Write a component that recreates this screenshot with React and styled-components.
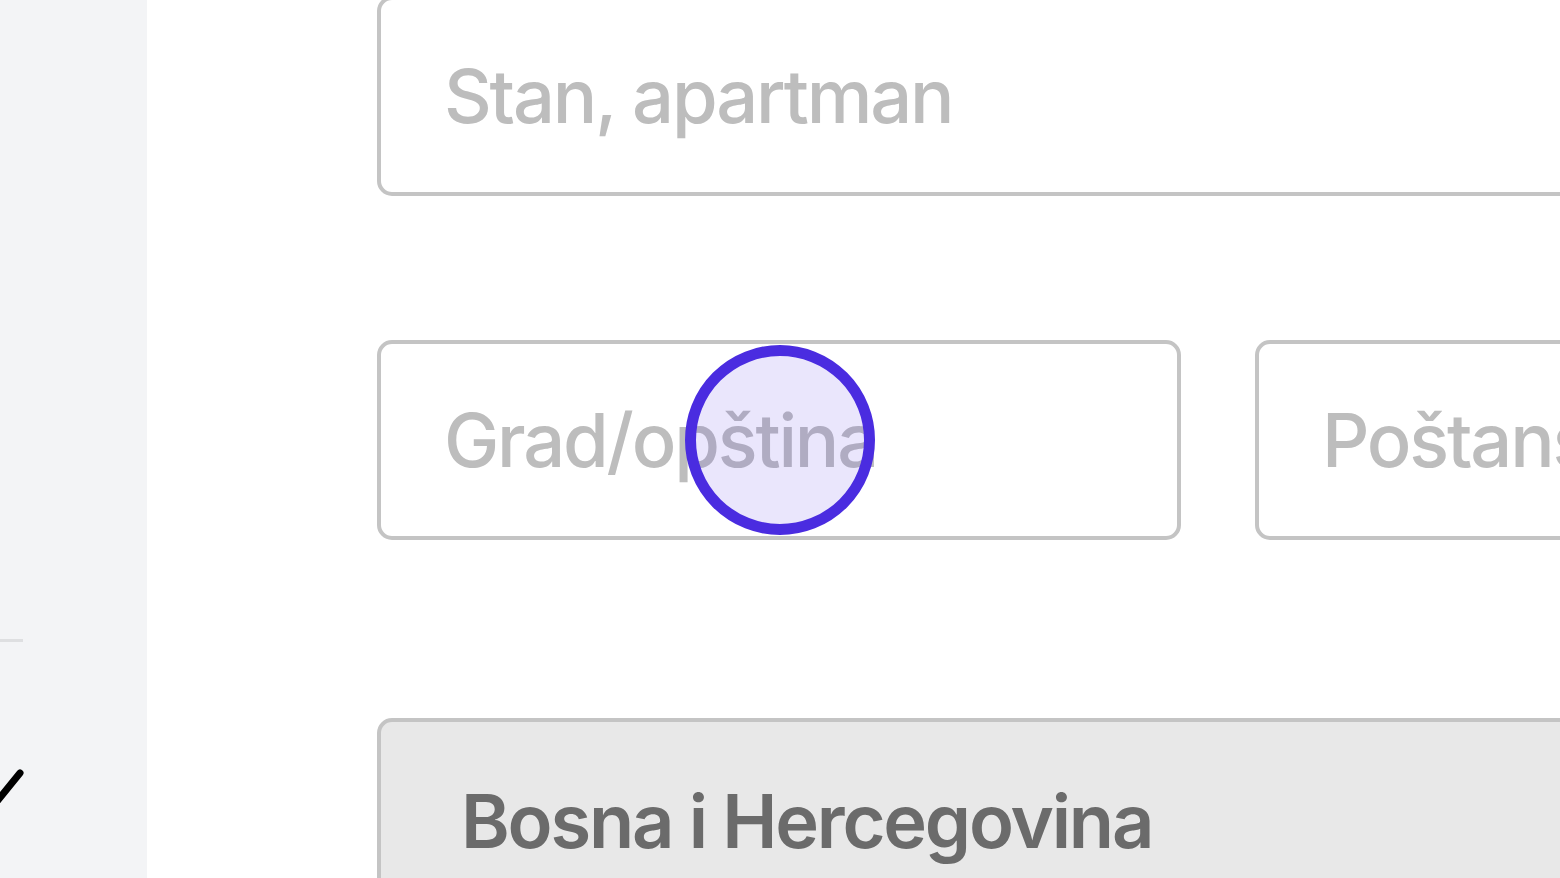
import React from 'react';
import styled, { createGlobalStyle } from 'styled-components';

const GlobalStyle = createGlobalStyle`
  html, body {
    margin: 0;
    padding: 0;
    height: 878px;
    overflow: hidden;
    background: #ffffff;
    font-family: Inter, "Noto Sans", sans-serif;
  }
`;

const Page = styled.div`
  display: flex;
  height: 878px;
  width: 1560px;
  overflow: hidden;
  position: relative;
`;

const Sidebar = styled.aside`
  flex: 0 0 147px;
  background: #f3f4f6;
  display: flex;
  flex-direction: column;
  padding-top: 639px;
  box-sizing: border-box;
`;

const Divider = styled.div`
  width: 23px;
  height: 3px;
  background: #dedfe1;
`;

const CheckIcon = styled.svg`
  margin-top: 124px;
  overflow: visible;
  display: block;
`;

const Main = styled.main`
  flex: 1;
  padding-left: 230px;
  min-width: 0;
`;

const Form = styled.form`
  width: 1682px;
  margin-top: -4px;
  display: flex;
  flex-direction: column;
`;

const Row = styled.div`
  display: grid;
  grid-template-columns: ${(p) => (p.$split ? '1fr 1fr' : '1fr')};
  column-gap: 74px;
  margin-bottom: ${(p) => p.$space}px;
`;

const Input = styled.input`
  box-sizing: border-box;
  width: 100%;
  height: 200px;
  border: 4px solid #c4c4c4;
  border-radius: 15px;
  padding: 0 0 0 63px;
  font-family: Inter, "Noto Sans", sans-serif;
  font-size: 74px;
  font-weight: 500;
  letter-spacing: -2.2px;
  color: #333;
  background: #fff;
  outline: none;
  &::placeholder {
    color: #bdbdbd;
  }
`;

const Select = styled.div`
  box-sizing: border-box;
  width: 100%;
  height: 200px;
  border: 4px solid #c4c4c4;
  border-radius: 15px;
  background: #e8e8e8;
  padding: 55px 0 0 80px;
  font-size: 74px;
  font-weight: 600;
  letter-spacing: -2.2px;
  color: #6b6b6b;
  line-height: 1.2;
`;

const Ripple = styled.div`
  position: absolute;
  left: 685px;
  top: 345px;
  width: 190px;
  height: 190px;
  box-sizing: border-box;
  border-radius: 50%;
  border: 11px solid #4a2ce0;
  background: rgba(90, 60, 230, 0.13);
  pointer-events: none;
`;

export default function App() {
  return (
    <>
      <GlobalStyle />
      <Page>
        <Sidebar>
          <Divider />
          <CheckIcon width="24" height="34" viewBox="0 0 24 34">
            <path d="M-10 44 L20 7" stroke="#000" strokeWidth="7" strokeLinecap="round" fill="none" />
          </CheckIcon>
        </Sidebar>
        <Main>
          <Form onSubmit={(e) => e.preventDefault()}>
            <Row $space={144}>
              <Input placeholder="Stan, apartman" />
            </Row>
            <Row $split $space={178}>
              <Input placeholder="Grad/opština" />
              <Input placeholder="Poštanski broj" />
            </Row>
            <Row $space={0}>
              <Select>Bosna i Hercegovina</Select>
            </Row>
          </Form>
        </Main>
        <Ripple />
      </Page>
    </>
  );
}
